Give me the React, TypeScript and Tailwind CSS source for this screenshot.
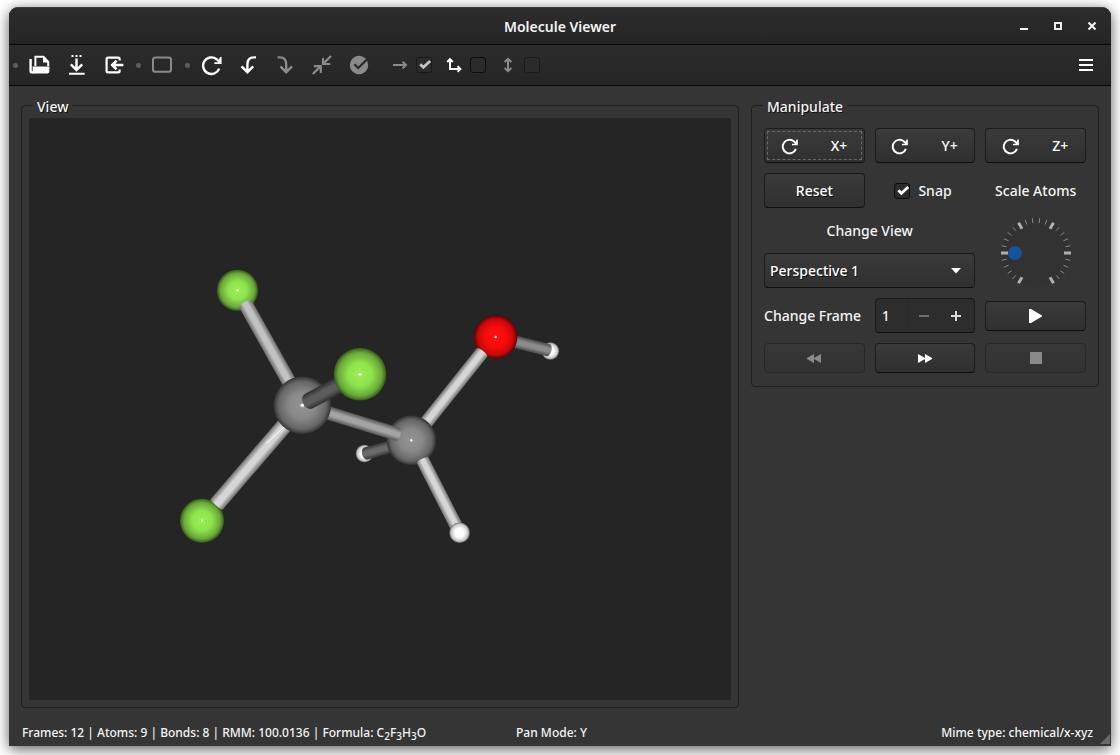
import { useState } from "react";
import type { ReactNode } from "react";

type Bond = {
  from: [number, number];
  to: [number, number];
  width: number;
  tone: "bright" | "light" | "mid" | "grey" | "dark" | "dim";
  cap?: number;
};

const TONES: Record<Bond["tone"], [string, string]> = {
  bright: ["#d6d6d6", "#707070"],
  light: ["#c2c2c2", "#686868"],
  mid: ["#a4a4a4", "#555555"],
  grey: ["#8c8c8c", "#484848"],
  dark: ["#5c5c5c", "#303030"],
  dim: ["#6a6a6a", "#363636"],
};

const ATOM_COLORS = {
  fluorine: ["#9af052", "#8fe34d", "#69a738", "#365a1c"],
  carbon: ["#939393", "#898989", "#666666", "#333333"],
  oxygen: ["#ff1010", "#fb0c0c", "#c40808", "#5c0303"],
  hydrogen: ["#ffffff", "#fbfbfb", "#c4c4c4", "#606060"],
};

type Element = keyof typeof ATOM_COLORS;

function Atom({ x, y, r, element }: { x: number; y: number; r: number; element: Element }) {
  return (
    <g>
      <circle cx={x} cy={y} r={r} fill={`url(#atom-${element})`} />
      {element !== "hydrogen" && <circle cx={x} cy={y} r={r > 25 ? 1.6 : 1.2} fill="#fff" />}
    </g>
  );
}

function Stick({ from, to, width, tone, cap = 0 }: Bond) {
  const dx = to[0] - from[0];
  const dy = to[1] - from[1];
  const length = Math.hypot(dx, dy);
  const angle = (Math.atan2(dy, dx) * 180) / Math.PI;
  const h = width / 2;
  return (
    <path
      d={`M0 ${-h} H${length} V${h} H0 A${cap} ${h} 0 0 1 0 ${-h} Z`}
      fill={`url(#stick-${tone})`}
      transform={`translate(${from[0]} ${from[1]}) rotate(${angle})`}
    />
  );
}

function Molecule() {
  return (
    <svg
      viewBox="29 118 702 582"
      className="block min-h-[300px] w-full flex-1 basis-0 bg-[#252525]"
      role="img"
      aria-label="Ball and stick model"
    >
      <defs>
        {(Object.keys(ATOM_COLORS) as Element[]).map((key) => (
          <radialGradient id={`atom-${key}`} key={key}>
            <stop offset="0" stopColor={ATOM_COLORS[key][0]} />
            <stop offset="0.45" stopColor={ATOM_COLORS[key][1]} />
            <stop offset="0.83" stopColor={ATOM_COLORS[key][2]} />
            <stop offset="1" stopColor={ATOM_COLORS[key][3]} />
          </radialGradient>
        ))}
        {(Object.keys(TONES) as Bond["tone"][]).map((key) => (
          <linearGradient id={`stick-${key}`} key={key} x1="0" y1="0" x2="0" y2="1">
            <stop offset="0" stopColor={TONES[key][1]} />
            <stop offset="0.35" stopColor={TONES[key][0]} />
            <stop offset="0.65" stopColor={TONES[key][0]} />
            <stop offset="1" stopColor={TONES[key][1]} />
          </linearGradient>
        ))}
      </defs>

      <Atom x={237.5} y={290.3} r={20.5} element="fluorine" />
      <Stick from={[246, 305]} to={[302, 405]} width={14.5} tone="light" cap={3.5} />
      <Atom x={202} y={520.7} r={22} element="fluorine" />
      <Stick from={[216.5, 504.5]} to={[296, 412]} width={16} tone="bright" cap={1} />
      <path d="M266.5 443.5 L285 426" stroke="#fff" strokeWidth="1" />

      <Atom x={364.5} y={453.5} r={8.8} element="hydrogen" />
      <Stick from={[366, 453.5]} to={[411, 441]} width={12.5} tone="dim" cap={4} />
      <Atom x={550.3} y={351} r={8.8} element="hydrogen" />
      <Stick from={[548, 350]} to={[500, 338]} width={12.5} tone="grey" cap={3.5} />
      <Atom x={495.7} y={337} r={21.7} element="oxygen" />
      <Stick from={[482, 352.5]} to={[411, 441.5]} width={13.5} tone="bright" cap={2} />
      <Atom x={411.3} y={440.3} r={24.7} element="carbon" />
      <Stick from={[422.8, 460.5]} to={[457, 527.5]} width={13} tone="bright" cap={2} />
      <Atom x={459.6} y={532.7} r={10.3} element="hydrogen" />
      <Stick from={[397.5, 434.3]} to={[312, 408]} width={13.5} tone="mid" cap={3} />

      <Atom x={302.3} y={405.3} r={28.7} element="carbon" />
      <Stick from={[309, 401]} to={[352, 378]} width={16.5} tone="dark" cap={6.5} />
      <circle cx="302.3" cy="405.3" r="1.6" fill="#fff" />
      <Atom x={360} y={374.3} r={26.3} element="fluorine" />
    </svg>
  );
}

function Glyph({ children, size = "size-[22px]", box = 22, width = 2.4 }: { children: ReactNode; size?: string; box?: number; width?: number }) {
  return (
    <svg
      viewBox={`0 0 ${box} ${box}`}
      className={`${size} shrink-0`}
      fill="none"
      stroke="currentColor"
      strokeWidth={width}
      aria-hidden="true"
    >
      {children}
    </svg>
  );
}

function RotateGlyph({ size }: { size?: string }) {
  return (
    <Glyph size={size}>
      <path d="M18.2 14.6 A8.3 8.3 0 1 1 15.6 5.2 L18.2 7.6" />
      <path d="M20.6 3 V10 H13.4 V8.2 H17 L19 3 Z" fill="currentColor" stroke="none" />
    </Glyph>
  );
}

function ToolButton({ label, disabled, children }: { label: string; disabled?: boolean; children: ReactNode }) {
  return (
    <button
      type="button"
      aria-label={label}
      disabled={disabled}
      className="flex h-8 w-[37px] items-center justify-center text-white disabled:text-[#8a8a8a]"
    >
      {children}
    </button>
  );
}

function Dot() {
  return <span className="mr-[3px] ml-1 size-[5px] shrink-0 rounded-full bg-[#5e5e5e]" />;
}

function CheckBox({ id, defaultChecked, disabled }: { id: string; defaultChecked?: boolean; disabled?: boolean }) {
  return (
    <span className="grid size-4 shrink-0">
      <input
        id={id}
        type="checkbox"
        defaultChecked={defaultChecked}
        disabled={disabled}
        className="peer col-start-1 row-start-1 size-4 appearance-none rounded-[3px] border border-[#0c0c0c] bg-[#2b2b2b] disabled:border-[#1a1a1a]"
      />
      <svg
        viewBox="0 0 16 16"
        className="pointer-events-none invisible col-start-1 row-start-1 size-4 text-white peer-checked:visible peer-disabled:text-[#c4c4c4]"
        fill="none"
        stroke="currentColor"
        strokeWidth="2.8"
        aria-hidden="true"
      >
        <path d="M4.3 7.2 L7.4 10.3 L14.2 4" />
      </svg>
    </span>
  );
}

function Toggle({ id, label, checked, disabled, children }: { id: string; label: string; checked?: boolean; disabled?: boolean; children: ReactNode }) {
  return (
    <label
      htmlFor={id}
      aria-label={label}
      className={disabled ? "flex items-center gap-2 text-[#8a8a8a]" : "flex items-center gap-2 text-white"}
    >
      <Glyph size="size-4" box={16} width={2}>{children}</Glyph>
      <CheckBox id={id} defaultChecked={checked} disabled={disabled} />
    </label>
  );
}

const SURFACE =
  "items-center rounded-[4px] border border-[#1b1b1b] border-b-[#0f0f0f] bg-linear-to-b from-[#3a3a3a] to-[#303030] text-white disabled:border-[#272727] disabled:from-[#373737] disabled:to-[#323232] disabled:text-[#8a8a8a]";

const BUTTON = `${SURFACE} flex justify-center`;

function AxisButton({ axis, focused }: { axis: string; focused?: boolean }) {
  return (
    <button
      type="button"
      className={`${SURFACE} grid h-[35px] grid-cols-2 justify-items-center ${focused ? "outline-1 -outline-offset-4 outline-[#6a6a6a] outline-dashed" : ""}`}
    >
      <RotateGlyph size="size-[18px]" />
      {axis}
    </button>
  );
}

function Dial() {
  const ticks = Array.from({ length: 26 }, (_, i) => 240 - i * 12);
  return (
    <div className="col-start-3 row-span-2 row-start-3 grid size-[70px] place-self-center">
      <svg viewBox="-35 -35 70 70" className="col-start-1 row-start-1 size-[70px]" aria-hidden="true">
        <circle r="35" fill="#323232" />
        {ticks.map((deg, i) => {
          const a = (deg * Math.PI) / 180;
          const major = i % 5 === 0;
          const inner = major ? 28 : 30;
          return (
            <line
              key={deg}
              x1={Math.cos(a) * inner}
              y1={-Math.sin(a) * inner}
              x2={Math.cos(a) * 35}
              y2={-Math.sin(a) * 35}
              stroke={major ? "#b0b0b0" : "#8a8a8a"}
              strokeWidth={major ? 3 : 1}
            />
          );
        })}
        <circle cx="-21" r="7" fill="#15539e" />
      </svg>
      <input id="scale" type="range" defaultValue={20} className="col-start-1 row-start-1 size-[70px] opacity-0" />
    </div>
  );
}

function Group({ title, className, legend, children }: { title: string; className: string; legend: string; children: ReactNode }) {
  return (
    <fieldset className={`min-w-0 rounded-[4px] border border-[#1e1e1e] ${className}`}>
      <legend className={`h-5 px-1 pt-1 leading-4 [text-shadow:1px_1px_0_#111] ${legend}`}>{title}</legend>
      {children}
    </fieldset>
  );
}

export default function App() {
  const [frame, setFrame] = useState(1);
  return (
    <div className="flex min-h-screen bg-white px-[9px] pt-[7px] pb-[9px] font-['Noto_Sans',sans-serif] text-sm font-medium text-[#f4f4f4]">
      <div className="relative flex flex-1 flex-col overflow-hidden rounded-t-[9px] bg-[#353535] shadow-[0_3px_14px_rgba(0,0,0,0.65)]">
        <header className="grid h-[38px] grid-cols-[1fr_auto_1fr] items-center border-t border-b border-t-[#3d3d3d] border-b-[#080808] bg-linear-to-b from-[#2c2c2c] to-[#252525]">
          <h1 className="col-start-2 pt-px font-semibold">Molecule Viewer</h1>
          <div className="flex justify-end gap-3 pr-2">
            <button type="button" aria-label="Minimise" className="flex size-[22px] items-center justify-center">
              <svg viewBox="0 0 10 10" className="size-[10px]" aria-hidden="true"><path d="M1 7h8v2H1z" fill="#eee" /></svg>
            </button>
            <button type="button" aria-label="Maximise" className="flex size-[22px] items-center justify-center">
              <svg viewBox="0 0 10 10" className="size-[10px]" aria-hidden="true"><path d="M2 2h6v6H2z" fill="none" stroke="#eee" strokeWidth="2" /></svg>
            </button>
            <button type="button" aria-label="Close" className="flex size-[22px] items-center justify-center">
              <svg viewBox="0 0 10 10" className="size-[10px]" aria-hidden="true"><path d="M1.5 1.5l7 7M8.5 1.5l-7 7" stroke="#eee" strokeWidth="2.2" /></svg>
            </button>
          </div>
        </header>

        <div role="toolbar" className="flex h-[41px] items-center border-b border-[#080808] bg-linear-to-b from-[#2c2c2c] to-[#252525]">
          <Dot />
          <ToolButton label="Open">
            <Glyph width={2}>
              <path d="M1.6 5 V17 Q1.6 18.4 3 18.4 H5" strokeWidth="2.4" />
              <path d="M6.4 12 V2.8 H14.5 L19.2 8 V12" />
              <path d="M14 2 L20.2 8.6 H14 Z M3.6 12.4 H20.4 V17.6 Q20.4 19.4 18.6 19.4 H3.6 Z" fill="currentColor" stroke="none" />
            </Glyph>
          </ToolButton>
          <ToolButton label="Save">
            <Glyph>
              <path d="M5.5 1h2v2h-2z M9.5 1h2v2h-2z M13.5 1h2v2h-2z M3 18.8h15.6v2H3z" fill="currentColor" stroke="none" />
              <path d="M10.5 4.5 V15.5 M4.8 10.4 L10.5 16 L16.2 10.4" />
            </Glyph>
          </ToolButton>
          <ToolButton label="Import">
            <Glyph width={2.2}>
              <path d="M16.6 6.5 V5 Q16.6 3.6 15.2 3.6 H5 Q3.6 3.6 3.6 5 V17 Q3.6 18.4 5 18.4 H15.2 Q16.6 18.4 16.6 17 V15.5" />
              <path d="M20.4 11 H9.5 M13.6 6.6 L9.2 11 L13.6 15.4" strokeWidth="2.6" />
            </Glyph>
          </ToolButton>
          <Dot />
          <ToolButton label="Frame" disabled>
            <Glyph width={2}>
              <rect x="1" y="3.4" width="18" height="14.4" rx="2.4" />
            </Glyph>
          </ToolButton>
          <Dot />
          <ToolButton label="Rotate">
            <RotateGlyph />
          </ToolButton>
          <ToolButton label="Undo">
            <Glyph>
              <path d="M18 3.4 H16 C11.5 3.4 9.4 6.4 9.4 10.5 V17.5 M3.6 12.4 L9.4 18.2 L15.2 12.4" />
            </Glyph>
          </ToolButton>
          <ToolButton label="Redo" disabled>
            <Glyph>
              <path d="M2.6 3.4 H4.8 C9.3 3.4 11.2 6.4 11.2 10.5 V17.5 M5.4 12.4 L11.2 18.2 L17 12.4" />
            </Glyph>
          </ToolButton>
          <ToolButton label="Fit" disabled>
            <Glyph width={2.2}>
              <path d="M19 2 L11.6 9.4 M11 4 V10 H18.4 M0.8 20 L8.2 12.6 M1.8 12.2 H8.8 V19" />
            </Glyph>
          </ToolButton>
          <ToolButton label="Apply" disabled>
            <Glyph>
              <circle cx="10" cy="11" r="9.2" fill="currentColor" stroke="none" />
              <path d="M5.4 10.2 L9.2 14 L18.4 5" stroke="#292929" strokeWidth="2.2" />
            </Glyph>
          </ToolButton>
          <div className="flex items-center gap-[14px] pl-[14px]">
            <Toggle id="pan-x" label="Pan X" checked disabled>
              <path d="M1 8 H14 M10.6 4.6 L14 8 L10.6 11.4" />
            </Toggle>
            <Toggle id="pan-y" label="Pan Y">
              <path d="M4 2 V12 H14.5 M1.2 5 L4 2.2 L6.8 5 M11.6 9.2 L14.4 12 L11.6 14.8" />
            </Toggle>
            <Toggle id="pan-z" label="Pan Z" disabled>
              <path d="M8 2 V14 M4.6 5 L8 1.8 L11.4 5 M4.6 11 L8 14.2 L11.4 11" />
            </Toggle>
          </div>
          <button type="button" aria-label="Menu" className="mr-[14px] ml-auto flex size-[22px] items-center justify-center">
            <svg viewBox="0 0 14 12" className="h-3 w-[14px]" aria-hidden="true"><path d="M0 0h14v2H0z M0 5h14v2H0z M0 10h14v2H0z" fill="#fff" /></svg>
          </button>
        </div>

        <main className="flex flex-1 gap-3 px-3 pt-[9px]">
          <Group title="View" legend="ml-1" className="flex flex-1 flex-col px-[7px] pt-[3px] pb-[7px]">
            <Molecule />
          </Group>

          <Group title="Manipulate" legend="-ml-px" className="w-[348px] shrink-0 self-start px-3 pt-[13px] pb-[13px]">
            <div className="grid grid-cols-3 grid-rows-[35px_35px_25px_35px_35px_30px] gap-[10px]">
              <AxisButton axis="X+" focused />
              <AxisButton axis="Y+" />
              <AxisButton axis="Z+" />

              <button type="button" className={`${BUTTON} [text-shadow:1px_1px_0_#111]`}>Reset</button>
              <label htmlFor="snap" className="flex items-center justify-center gap-2 pr-1">
                <CheckBox id="snap" defaultChecked />
                Snap
              </label>
              <label htmlFor="scale" className="self-center justify-self-center whitespace-nowrap">Scale Atoms</label>

              <label htmlFor="view" className="col-span-2 self-center justify-self-center">Change View</label>
              <Dial />
              <div className="col-span-2 grid">
                <select
                  id="view"
                  className={`${BUTTON} col-start-1 row-start-1 appearance-none px-[5px] [text-shadow:1px_1px_0_#111]`}
                >
                  <option>Perspective 1</option>
                </select>
                <svg viewBox="0 0 10 6" className="pointer-events-none col-start-1 row-start-1 mr-[14px] h-[6px] w-[10px] place-self-center justify-self-end" aria-hidden="true">
                  <path d="M0 0h10L5 5.5z" fill="#fff" />
                </svg>
              </div>

              <label htmlFor="frame" className="self-center whitespace-nowrap">Change Frame</label>
              <div className="flex overflow-hidden rounded-[4px] border border-[#1b1b1b] border-b-[#0f0f0f] bg-[#2d2d2d]">
                <input
                  id="frame"
                  value={frame}
                  onChange={(e) => setFrame(Number(e.target.value) || 1)}
                  className="w-8 min-w-0 border-r border-[#292929] bg-transparent pl-[6px]"
                />
                <button type="button" aria-label="Previous frame" disabled={frame <= 1} onClick={() => setFrame(frame - 1)} className="flex w-8 items-center justify-center disabled:text-[#6c6c6c]">
                  <svg viewBox="0 0 10 10" className="size-[10px]" aria-hidden="true"><path d="M0 4h10v2H0z" fill="currentColor" /></svg>
                </button>
                <button type="button" aria-label="Next frame" onClick={() => setFrame(frame + 1)} className="flex w-8 items-center justify-center text-[#d8d8d8]">
                  <svg viewBox="0 0 10 10" className="size-[10px]" aria-hidden="true"><path d="M0 4h10v2H0z M4 0h2v10H4z" fill="currentColor" /></svg>
                </button>
              </div>
              <button type="button" aria-label="Play" className={`${BUTTON} h-[30px] self-center`}>
                <svg viewBox="0 0 13 14" className="h-[14px] w-[13px]" aria-hidden="true"><path d="M0 0 L2 0 L13 6.4 V7.6 L2 14 H0z" fill="currentColor" /></svg>
              </button>

              <button type="button" aria-label="Rewind" disabled className={BUTTON}>
                <svg viewBox="0 0 14 9" className="h-[9px] w-[14px]" aria-hidden="true"><path d="M7 0 V9 L0 4.9 V4.1z M14 0 V9 L7 4.9 V4.1z" fill="currentColor" /></svg>
              </button>
              <button type="button" aria-label="Forward" className={BUTTON}>
                <svg viewBox="0 0 14 9" className="h-[9px] w-[14px]" aria-hidden="true"><path d="M7 0 V9 L14 4.9 V4.1z M0 0 V9 L7 4.9 V4.1z" fill="currentColor" /></svg>
              </button>
              <button type="button" aria-label="Stop" disabled className={BUTTON}>
                <span className="size-3 bg-current" />
              </button>
            </div>
          </Group>
        </main>

        <footer className="grid h-[38px] grid-cols-[494fr_auto_506fr] items-center pt-3 pr-[18px] pl-[13px] text-xs leading-5">
          <span className="whitespace-nowrap">
            Frames: 12 | Atoms: 9 | Bonds: 8 | RMM: 100.0136 | Formula: C<sub className="text-[10px]">2</sub>F
            <sub className="text-[10px]">3</sub>H<sub className="text-[10px]">3</sub>O
          </span>
          <span>Pan Mode: Y</span>
          <span className="justify-self-end">Mime type: chemical/x-xyz</span>
        </footer>
        <svg viewBox="0 0 10 10" className="absolute right-px bottom-[2px] size-[10px]" aria-hidden="true">
          <path d="M10 0 V10 H0z" fill="#6a6a6a" />
        </svg>
      </div>
    </div>
  );
}
